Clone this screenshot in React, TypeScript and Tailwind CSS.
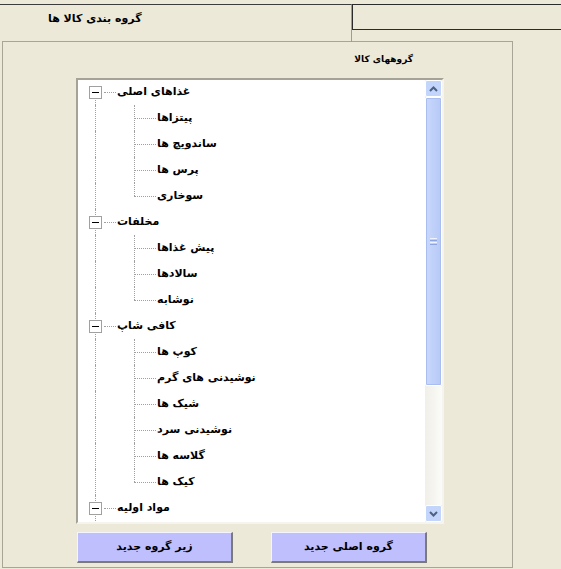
import React from "react";

type Node = { name: string; children: string[] };

const tree: Node[] = [
  { name: "غذاهای اصلی", children: ["پیتزاها", "ساندویچ ها", "پرس ها", "سوخاری"] },
  { name: "مخلفات", children: ["پیش غذاها", "سالادها", "نوشابه"] },
  {
    name: "کافی شاپ",
    children: ["کوپ ها", "نوشیدنی های گرم", "شیک ها", "نوشیدنی سرد", "گلاسه ها", "کیک ها"],
  },
  { name: "مواد اولیه", children: [] },
];

const font = { fontFamily: '"DejaVu Sans", "Noto Sans", sans-serif' };

function RootRow({ name, first }: { name: string; first: boolean }) {
  return (
    <div className="relative flex h-[26px] items-center">
      {/* root vertical line */}
      <div
        className={
          first
            ? "absolute left-[17px] top-[13px] bottom-0 border-l border-dotted border-[#a0a0a0]"
            : "absolute left-[17px] top-0 bottom-0 border-l border-dotted border-[#a0a0a0]"
        }
      />
      <div className="relative ml-[11px] flex h-[13px] w-[13px] items-center justify-center border border-[#a0a0a0] bg-white">
        <div className="h-px w-[7px] bg-black" />
      </div>
      <div className="ml-[2px] w-[12px] border-t border-dotted border-[#a0a0a0]" />
      <span dir="rtl" className="ml-[1px] text-[11px] font-bold text-black">
        {name}
      </span>
    </div>
  );
}

function ChildRow({ name, last }: { name: string; last: boolean }) {
  return (
    <div className="relative flex h-[26px] items-center">
      <div className="absolute left-[17px] top-0 bottom-0 border-l border-dotted border-[#a0a0a0]" />
      <div
        className={
          last
            ? "absolute left-[56px] top-0 h-[13px] border-l border-dotted border-[#a0a0a0]"
            : "absolute left-[56px] top-0 bottom-0 border-l border-dotted border-[#a0a0a0]"
        }
      />
      <div className="ml-[56px] w-[22px] border-t border-dotted border-[#a0a0a0]" />
      <span dir="rtl" className="ml-[1px] text-[11px] font-bold text-black">
        {name}
      </span>
    </div>
  );
}

function ScrollBar() {
  return (
    <div className="flex h-full w-[17px] flex-col bg-[#f3f2ec]">
      <div className="flex h-[17px] items-center justify-center rounded-[2px] border border-white bg-[#c4d5fb]">
        <svg width="9" height="6" viewBox="0 0 9 6">
          <path d="M1 5 L4.5 1.5 L8 5" stroke="#4d6185" strokeWidth="2" fill="none" />
        </svg>
      </div>
      <div className="flex h-[289px] items-center justify-center rounded-[2px] border border-white bg-gradient-to-r from-[#c9d8fc] to-[#b6c9f6] outline outline-1 -outline-offset-2 outline-[#a9bdf0]">
        <div className="flex flex-col gap-px">
          <div className="h-px w-[7px] bg-[#eef3ff]" />
          <div className="h-px w-[7px] bg-[#8ca4e0]" />
          <div className="h-px w-[7px] bg-[#eef3ff]" />
          <div className="h-px w-[7px] bg-[#8ca4e0]" />
        </div>
      </div>
      <div className="flex-1 bg-gradient-to-r from-[#f0efe8] to-[#fbfbf8]" />
      <div className="flex h-[17px] items-center justify-center rounded-[2px] border border-white bg-[#c4d5fb]">
        <svg width="9" height="6" viewBox="0 0 9 6">
          <path d="M1 1 L4.5 4.5 L8 1" stroke="#4d6185" strokeWidth="2" fill="none" />
        </svg>
      </div>
    </div>
  );
}

function Button({ label }: { label: string }) {
  return (
    <button className="flex h-[31px] w-[156px] items-center justify-center border-t border-l border-t-[#f4f4ff] border-l-[#f4f4ff] border-b-2 border-r-2 border-b-[#7a7a7a] border-r-[#7a7a7a] bg-[#bfbffd]">
      <span dir="rtl" className="text-[11px] font-bold text-black">
        {label}
      </span>
    </button>
  );
}

export default function App() {
  return (
    <div className="h-[569px] w-[561px] overflow-hidden bg-[#ece9d8]" style={font}>
      {/* tabs */}
      <div className="flex pt-[4px]">
        <div className="flex h-[38px] w-[352px] items-start border-t border-r border-t-[#3c3c3c] border-r-[#a09d8f] pl-[48px] pt-[6px]">
          <span dir="rtl" className="text-[11px] font-bold text-black">
            گروه بندی کالا ها
          </span>
        </div>
        <div className="h-[26px] flex-1 border-t border-l border-b border-[#2b2b2b]" />
      </div>

      {/* panel */}
      <div className="ml-[2px] -mt-px h-[527px] w-[511px] border border-[#a8a596]">
        <div className="mt-[10px] flex h-[16px] items-center justify-end pr-[99px]">
          <span dir="rtl" className="text-[9px] font-bold text-black">
            گروههای کالا
          </span>
        </div>

        <div className="ml-[73px] mt-[10px] flex h-[446px] w-[368px] border-t-2 border-l-2 border-b-2 border-r-2 border-t-[#a5a296] border-l-[#a5a296] border-b-[#f5f4ee] border-r-[#f5f4ee] bg-white">
          <div className="flex-1 overflow-hidden">
            <div className="-mt-px">
              {tree.map((n, i) => (
                <div key={n.name}>
                  <RootRow name={n.name} first={i === 0} />
                  {n.children.map((c, j) => (
                    <ChildRow key={c} name={c} last={j === n.children.length - 1} />
                  ))}
                </div>
              ))}
            </div>
          </div>
          <ScrollBar />
        </div>

        <div className="ml-[74px] mt-[8px] flex gap-[38px]">
          <Button label="زیر گروه جدید" />
          <Button label="گروه اصلی جدید" />
        </div>
      </div>
    </div>
  );
}
